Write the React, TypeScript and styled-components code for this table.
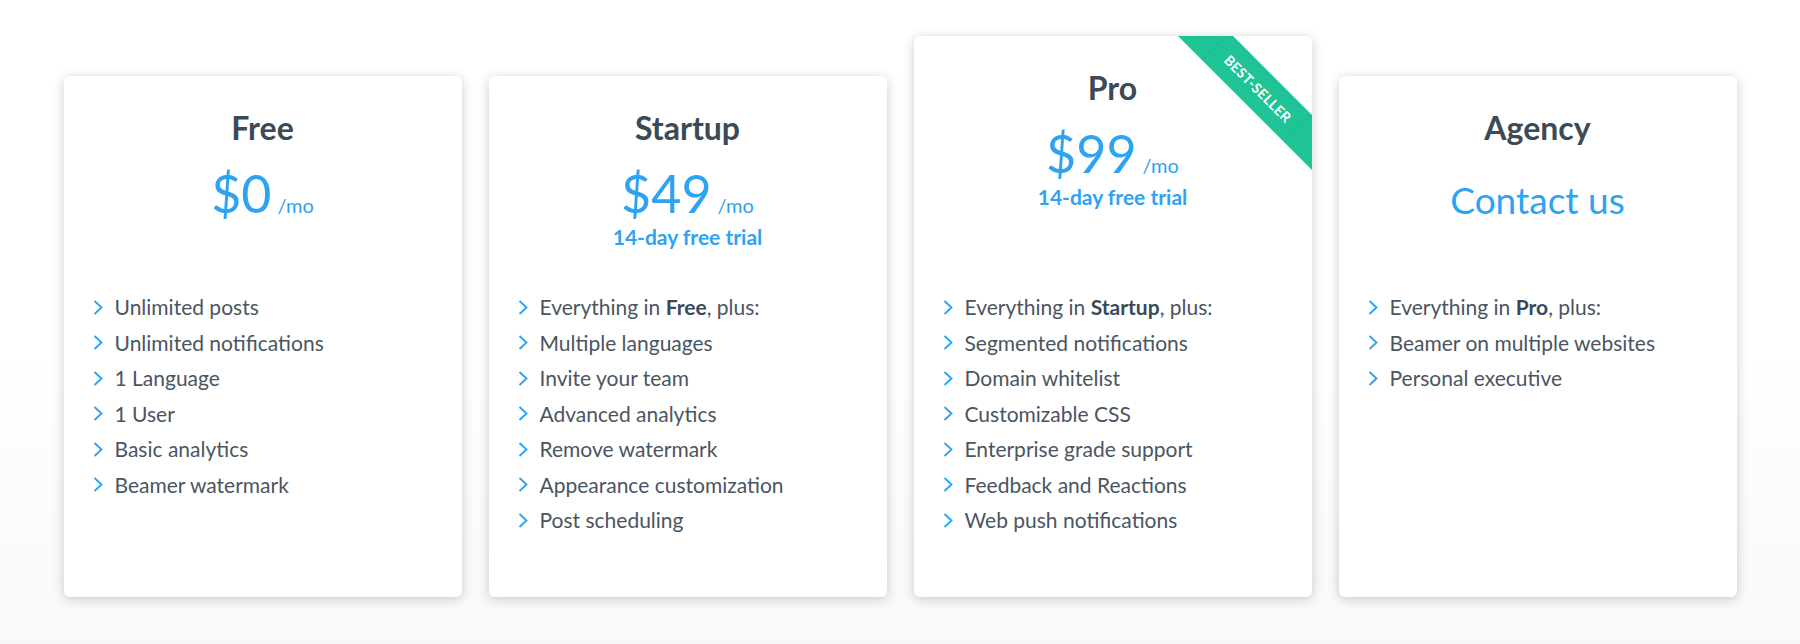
import styled, { createGlobalStyle } from "styled-components";

const blue = "#2ea3f2";
const slate = "#3b4a56";
const textGray = "#4a5562";

const GlobalStyle = createGlobalStyle`
  html, body {
    margin: 0;
    padding: 0;
  }
  body {
    font-family: Lato, "Open Sans", Arial, sans-serif;
    -webkit-font-smoothing: antialiased;
  }
`;

const Page = styled.div`
  min-height: 644px;
  background: linear-gradient(180deg, #ffffff 0%, #ffffff 55%, #f8f8f8 100%);
  overflow: hidden;
`;

const Plans = styled.div`
  display: flex;
  align-items: flex-end;
  gap: 27px;
  width: 1673px;
  margin: 36px auto 0;
`;

const Card = styled.div<{ featured?: boolean }>`
  position: relative;
  flex: 1;
  height: ${(p) => (p.featured ? 561 : 521)}px;
  display: flex;
  flex-direction: column;
  background: #fff;
  border-radius: 6px;
  box-shadow: 0 2px 12px rgba(0, 0, 0, 0.2);
  overflow: hidden;
`;

const Header = styled.div`
  flex: 1;
  padding-top: 33px;
  text-align: center;
`;

const Title = styled.h2`
  margin: 0;
  font-size: 32px;
  line-height: 1.2;
  font-weight: 700;
  color: ${slate};
`;

const Price = styled.div`
  margin-top: 15px;
  font-size: 52px;
  line-height: 1.2;
  color: ${blue};
`;

const Per = styled.span`
  margin-left: 6px;
  font-size: 20px;
`;

const Trial = styled.div`
  font-size: 21px;
  line-height: 24px;
  font-weight: 700;
  color: ${blue};
`;

const Contact = styled.div`
  margin-top: 31px;
  font-size: 37px;
  line-height: 1.2;
  color: ${blue};
`;

const Features = styled.ul`
  height: 308px;
  margin: 0;
  padding: 0 0 0 29px;
  list-style: none;
  flex-shrink: 0;
`;

const Feature = styled.li`
  display: flex;
  align-items: center;
  gap: 12px;
  height: 35.5px;
  font-size: 21px;
  color: ${textGray};

  b {
    font-weight: 700;
    color: ${slate};
  }
`;

const Ribbon = styled.div`
  position: absolute;
  top: 33px;
  right: -46px;
  width: 200px;
  height: 39px;
  line-height: 40px;
  transform: rotate(45deg);
  background: #1ec495;
  color: #fff;
  font-size: 14px;
  font-weight: 700;
  text-align: center;
  letter-spacing: 0.3px;

  &::before,
  &::after {
    content: "";
    position: absolute;
    top: 0;
    bottom: 0;
    width: 1px;
    background: rgba(0, 0, 0, 0.07);
  }
  &::before {
    left: calc(50% - 60px);
  }
  &::after {
    left: calc(50% + 56px);
  }
`;

const Chevron = () => (
  <svg width="10" height="15" viewBox="0 0 10 15" style={{ flexShrink: 0, marginTop: 1 }}>
    <polyline points="1.5,1 8.5,7.5 1.5,14" fill="none" stroke={blue} strokeWidth="1.9" />
  </svg>
);

type Plan = {
  name: string;
  price?: string;
  trial?: boolean;
  contact?: boolean;
  featured?: boolean;
  base?: string;
  features: string[];
};

const plans: Plan[] = [
  {
    name: "Free",
    price: "$0",
    features: [
      "Unlimited posts",
      "Unlimited notifications",
      "1 Language",
      "1 User",
      "Basic analytics",
      "Beamer watermark",
    ],
  },
  {
    name: "Startup",
    price: "$49",
    trial: true,
    base: "Free",
    features: [
      "Multiple languages",
      "Invite your team",
      "Advanced analytics",
      "Remove watermark",
      "Appearance customization",
      "Post scheduling",
    ],
  },
  {
    name: "Pro",
    price: "$99",
    trial: true,
    featured: true,
    base: "Startup",
    features: [
      "Segmented notifications",
      "Domain whitelist",
      "Customizable CSS",
      "Enterprise grade support",
      "Feedback and Reactions",
      "Web push notifications",
    ],
  },
  {
    name: "Agency",
    contact: true,
    base: "Pro",
    features: ["Beamer on multiple websites", "Personal executive"],
  },
];

export default function App() {
  return (
    <Page>
      <GlobalStyle />
      <Plans>
        {plans.map((plan) => (
          <Card key={plan.name} featured={plan.featured}>
            {plan.featured && <Ribbon>BEST-SELLER</Ribbon>}
            <Header>
              <Title>{plan.name}</Title>
              {plan.price && (
                <Price>
                  {plan.price}
                  <Per>/mo</Per>
                </Price>
              )}
              {plan.trial && <Trial>14-day free trial</Trial>}
              {plan.contact && <Contact>Contact us</Contact>}
            </Header>
            <Features>
              {plan.base && (
                <Feature>
                  <Chevron />
                  <span>
                    Everything in <b>{plan.base}</b>, plus:
                  </span>
                </Feature>
              )}
              {plan.features.map((f) => (
                <Feature key={f}>
                  <Chevron />
                  <span>{f}</span>
                </Feature>
              ))}
            </Features>
          </Card>
        ))}
      </Plans>
    </Page>
  );
}
